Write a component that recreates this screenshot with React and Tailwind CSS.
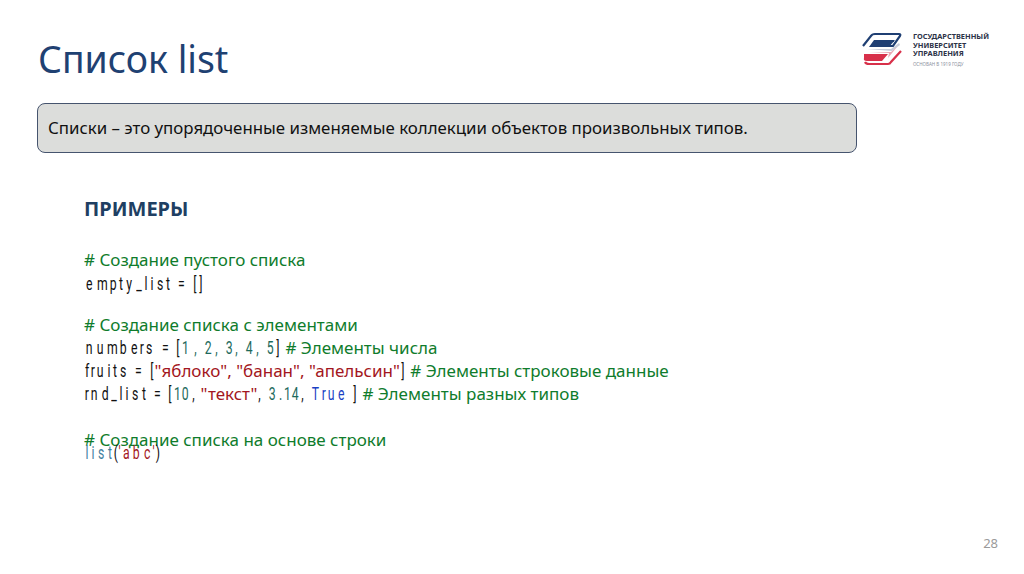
const sans = "font-['Noto_Sans','Open_Sans',sans-serif]";

function Logo() {
  return (
    <div className="flex items-center gap-[10px]">
      <svg width="42" height="34" viewBox="0 0 42 34" fill="none">
        <path d="M2 14 L10 4 Q11 2 14 2 H38 Q40 2 39 4 L32 14 H12 L15 9 H33" stroke="#1f3f73" strokeWidth="2.2" />
        <path d="M8 15 L13 8 H34 L28 15 Z" fill="#1f3f73" />
        <path d="M6 17 H30 L38 11 L39 13 L31 19 Z" fill="#c9cedb" />
        <path d="M3 22 H27 L21 29 H6 Q2 29 3 26 Z" fill="#d8304a" />
        <path d="M4 30 Q5 32 8 32 H27 Q29 32 30 30 L40 19" stroke="#d8304a" strokeWidth="2.2" />
        <path d="M8 20 H30 L36 15 L27 26 L28 21 Z" fill="#e9a9b5" />
      </svg>
      <div className={`${sans} flex flex-col text-[#2c3347] font-bold text-[7.4px] leading-[8.5px]`}>
        <span>ГОСУДАРСТВЕННЫЙ</span>
        <span>УНИВЕРСИТЕТ</span>
        <span>УПРАВЛЕНИЯ</span>
        <span className="mt-[3px] font-normal text-[4.5px] leading-[6px] text-[#8a8f9c]">ОСНОВАН В 1919 ГОДУ</span>
      </div>
    </div>
  );
}

function cell(ch) {
  if (ch === "'") return "w-[3px]";
  if (ch === " " || ch === "," || ch === "." || ch === "r" || ch === "(" || ch === ")") return "w-[5px]";
  if ("iltf[]".includes(ch)) return "w-[6px]";
  if (ch === "1") return "w-[7px]";
  if (ch === "m") return "w-[13px]";
  if (ch === "_") return "w-[8px]";
  return "w-[10.5px]";
}

const C = ({ children, className = "text-[#111111]" }) => (
  <span className={className}>
    {[...children].map((ch, i) => (
      <span
        key={i}
        className={`inline-block text-center whitespace-pre font-['Roboto',sans-serif] font-normal text-[18px] leading-[23px] scale-x-[0.68] ${cell(ch)}`}
      >
        {ch}
      </span>
    ))}
  </span>
);
const G = ({ children }) => <span className="text-[#0f7c2c]">{children}</span>;
const R = ({ children }) => <span className="text-[#a31621]">{children}</span>;
const N = ({ children }) => <C className="text-[#1d6a5c]">{children}</C>;

export default function App() {
  return (
    <div className={`${sans} relative w-[1024px] h-[574px] overflow-hidden bg-white`}>
      <div className="flex items-start justify-between pl-[38px] pr-[35px] pt-[34px] h-[103px]">
        <h1 className="text-[37.4px] leading-[50px] text-[#1f4172]">Список list</h1>
        <div className="-mt-[2px]"><Logo /></div>
      </div>

      <div className="ml-[37px] w-[820px] h-[50px] flex items-center pl-[10px] pb-[1px] rounded-[8px] border-[1.5px] border-[#46546e] bg-[#dcdddb] text-[16.85px] text-[#111]">
        Списки – это упорядоченные изменяемые коллекции объектов произвольных типов.
      </div>

      <div className="ml-[84px] mt-[44px] flex flex-col text-[17px] leading-[23px] text-[#111]">
        <div className="text-[20px] leading-[24px] font-bold text-[#1f3f63]">ПРИМЕРЫ</div>
        <div className="mt-[27px]"><G># Создание пустого списка</G></div>
        <div className="mt-[1px]"><C>empty_list = []</C></div>
        <div className="mt-[18px]"><G># Создание списка с элементами</G></div>
        <div><C>numbers = [</C><N>1 , 2, 3, 4, 5</N><C>]</C> <G># Элементы числа</G></div>
        <div><C>fruits = [</C><R>"яблоко", "банан", "апельсин"</R><C>]</C> <G># Элементы строковые данные</G></div>
        <div><C>rnd_list = [</C><N>10</N><C>, </C><R>"текст"</R><C>, </C><N>3.14</N><C>, </C><C className="text-[#1a3fc4]">True</C><C> ]</C> <G># Элементы разных типов</G></div>
        <div className="mt-[23px]"><G># Создание списка на основе строки</G></div>
        <div className="-mt-[10px]"><C className="text-[#3f7f9f]">list</C><C>(</C><C className="text-[#a31621]">'abc'</C><C>)</C></div>
      </div>

      <div className="absolute right-[26px] bottom-[21px] text-[13px] text-[#9a9a9a]">28</div>
    </div>
  );
}
